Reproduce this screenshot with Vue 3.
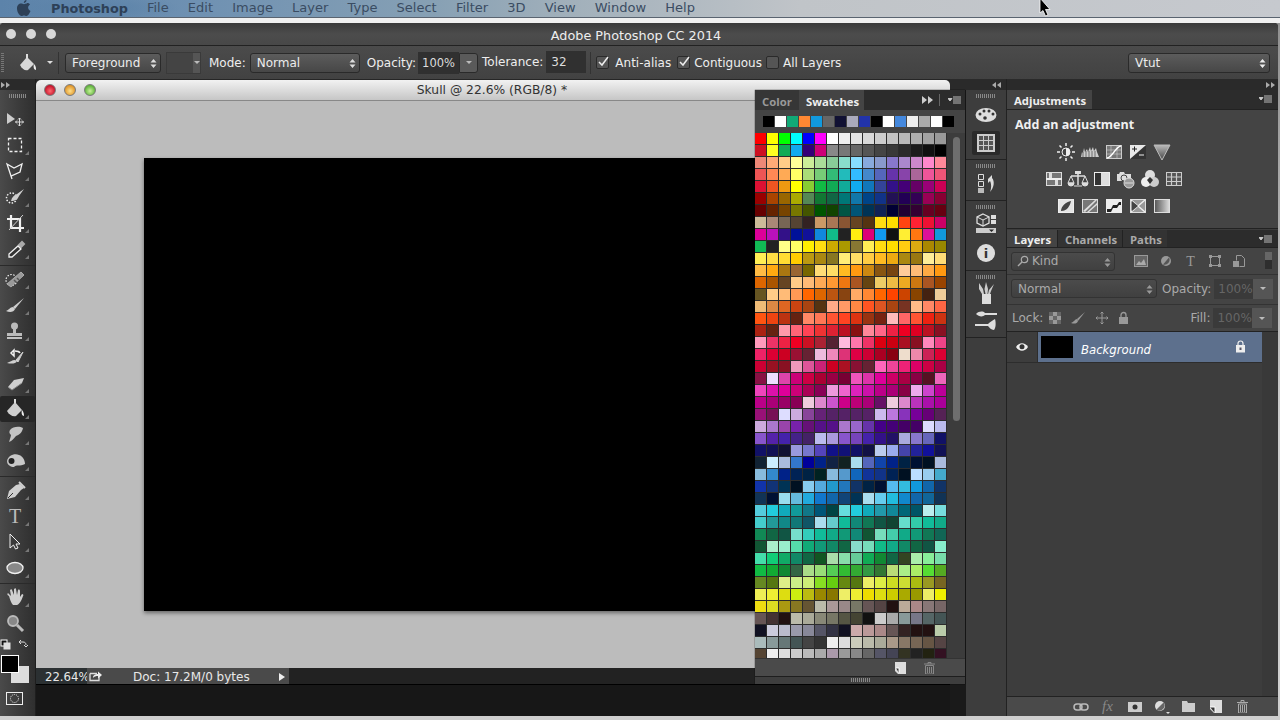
<script setup>
const menus = ['File', 'Edit', 'Image', 'Layer', 'Type', 'Select', 'Filter', '3D', 'View', 'Window', 'Help']

const recent = '000 fff 1a7 f83 19d 666 113 aab 23a 000 fff 48d eee aaa fff 000'.split(' ')
const swatchRows = [
  'f00 ff0 0f0 0ff 00f f0f fff eee e3e3e3 d8d8d8 ccc c2c2c2 b8b8b8 aeaeae a2a2a2 999',
  'c12 ff2 1a5 1ae 307 c07 888 777 666 555 444 383838 2a2a2a 1c1c1c 101010 000',
  'e87 fa7 fc8 ff9 ce9 ad9 8c9 8dc 8df 8ad 89c 87c a8c c8c f8c f89',
  'e55 f85 fa5 ff6 ad7 7c7 3b7 2bb 3bf 48c 56b 63a 84a a69 e59 e57',
  'd13 e52 e91 ff0 8c3 1b4 1a5 1a9 1ae 17b 349 318 407 606 907 c05',
  '900 a40 960 aa0 585 173 164 077 17a 048 138 215 205 305 905 803',
  '600 620 740 770 450 050 140 054 057 035 125 003 203 303 602 601',
  'cb9 a87 765 543 322 c96 a75 853 642 531 fd1 fd0 f41 f23 e13 c06',
  'd09 b1b 318 019 119 18d 1b8 222 fe1 d07 19e 111 fe3 f71 d19 19d',
  '1b5 222 ff8 ff6 fe0 fd1 ca0 a90 873 fe5 fd1 fd0 fc1 da1 a80 980',
  'fe5 fd4 fd3 fc0 b91 a81 872 fe7 fd6 fc4 fb2 ea1 a81 971 fe9 fd7',
  'fb4 fa1 a71 963 760 fd7 fd6 fb2 f91 c81 851 741 fc9 fb7 fa4 f91',
  'd60 a50 642 fc8 fb7 fa5 f93 e71 a52 641 ec6 eb4 ea2 c71 a52 940',
  '652 fc8 fb7 f95 f60 d60 b51 841 fa6 f83 f60 f40 c40 840 421 ec9',
  'eb7 d84 d62 c41 a41 531 fa8 f96 f84 f52 d52 a41 732 fb8 f86 f64',
  'f51 e41 b31 621 f86 f75 f53 f42 d31 931 721 fbb f66 f53 e21 c31',
  'a21 621 f9a f67 f45 e33 d23 b12 811 f89 f68 e24 e02 d02 b12 812',
  'f9b e36 e24 e02 c12 a23 523 fbd f7a e36 d01 c01 a12 812 f8b e48',
  'e26 d03 c02 913 623 ebd e8b d37 d04 c03 a02 801 edc e8a c25 d03',
  'c03 912 812 e9b d59 c27 c02 a12 813 623 f6b e49 e27 d06 c04 a04',
  '814 edf d4a c07 c04 a03 904 703 e5b d3a d09 c06 a04 804 512 e6b',
  'e4b d1a d09 c07 a05 805 e9d e6c d2b c1a b08 a07 804 eae c4c b09',
  'b08 a07 906 805 ecd d8c c5c c08 b07 a07 616 ecd d8c b3b a1a a09',
  '917 715 ddf cad 849 627 526 526 526 526 cbe b7d 83b 709 607 525',
  'cad a7c 94a 72a 617 518 518 a7c 96c 63a 408 407 406 406 ddf bbe',
  '85c 52a 42a 428 426 bbe a9d 85c 74b 42a 318 216 aad 87c 66b 116',
  '116 115 113 99d 77c 54b 118 117 116 114 bce 9ae 44a 229 119 115',
  '123 cef abd 37c 009 028 124 122 ade 56b 14a 028 024 013 012 abd',
  '8bd 38c 028 025 024 022 8bd 59c 16b 139 138 025 012 bdf 9ce 4ac',
  '13a 137 035 012 8ce 5ad 29c 27b 136 024 013 5be 3bd 19d 16a 136',
  '135 013 9de 6bd 2ad 17c 16a 147 035 ade 6ce 2bd 18c 16a 169 135',
  '5cd 2cd 1ab 199 178 057 044 6dd 2cd 1ab 29a 189 067 056 bee 7dd',
  '4cc 299 188 177 156 ade 6cc 1b9 187 175 154 143 6dc 3ca 1b9 1a8',
  '185 164 154 7dc 3cb 1b9 1a8 197 187 153 7db 4ca 1a8 197 175 165',
  '153 aec 9ec 5da 1a7 197 186 164 8dc 7db 1b8 1a8 186 164 154 8ec',
  '4da 1c7 1a6 186 164 152 ada 8da 6c9 1a5 183 164 342 aea 8e9 7da',
  '1b4 1a3 183 364 ad8 9d7 5c5 3b3 3a3 394 373 bd7 ae8 ae6 5d3 5a2',
  '682 571 de8 ce8 ce7 8d2 6c1 681 571 ee6 de4 cd2 cd3 ab1 992 762',
  'ee5 ee3 dd1 ce1 bb1 980 870 ee6 ee3 ed0 dd1 cc0 aa0 990 ee6 ee0',
  'ed1 dd2 a91 872 653 bba a99 988 776 655 544 211 ba9 a88 877 766',
  '655 433 211 bba aa9 887 776 554 443 111 ccc aaa 899 778 566 455',
  '112 ccd bbc 99a 889 556 334 112 caa b99 a88 655 322 211 211 bca',
  'abb 899 677 455 444 333 eee ddd ccb bba aa9 a98 876 765 654 544',
  '543 eee ddd ccc bbb aaa a9a 999 888 666 556 445 332 222 221 312',
].map((r) => r.split(' '))
const swatches = swatchRows.flat()

const L = '#cfcfcf'
const W = '#f0f0f0'
const tools = [
  { h: 26, svg: `<path d="M7 7v11l8-5z" fill="#ccc"/><path d="M19.5 12v8M15.5 16h8M18 13.5l1.5-1.5 1.5 1.5M18 18.5l1.5 1.5 1.5-1.5M17 14.5L15.5 16l1.5 1.5M22 14.5l1.5 1.5-1.5 1.5" stroke="#ddd" fill="none"/>` },
  { h: 26, fly: 1, svg: `<rect x="8.5" y="6.5" width="13" height="13" fill="none" stroke="${W}" stroke-width="1.3" stroke-dasharray="3 2"/>` },
  { h: 26, fly: 1, svg: `<path d="M7 6l7 4 8-4-2 8-9 4zM11 18l1 3" fill="none" stroke="${W}" stroke-width="1.3"/>` },
  { h: 26, fly: 1, svg: `<circle cx="11.5" cy="14" r="5" fill="none" stroke="${W}" stroke-width="1.5" stroke-dasharray="1.5 1.5"/><path d="M24 5l-7 5c-3 1-5 3-6 7 4 0 7-2 8-5z" fill="${L}"/>` },
  { h: 26, fly: 1, svg: `<path d="M11 5v13h13M7 9h13v13" fill="none" stroke="${W}" stroke-width="2.2"/><path d="M9 20L23 5" stroke="${L}"/>` },
  { h: 30, sep: 1, fly: 1, svg: `<path d="M19 9l3-3 2 2-3 3z" fill="#aaa" stroke="#aaa" stroke-width="2"/><path d="M18 10l3 3-9 8H9v-3z" fill="#333" stroke="${W}" stroke-width="1.3"/>` },
  { h: 26, fly: 1, svg: `<circle cx="11.5" cy="14" r="5.5" fill="none" stroke="${W}" stroke-width="1.2" stroke-dasharray="1.5 1.5"/><path d="M21 6l3 3-13 12-4-3z" fill="#999" stroke="#aaa"/><path d="M14 14l3 3M17 12l2 2" stroke="#555" stroke-width="1.5"/>` },
  { h: 26, fly: 1, svg: `<path d="M24 6L13 15l2 2z" fill="${L}"/><path d="M13 15c-3 0-4 3-7 4 4 2 8 1 9-2z" fill="${L}"/>` },
  { h: 26, fly: 1, svg: `<circle cx="14.5" cy="8" r="3.5" fill="#bbb"/><path d="M13 10h3v5h-3zM7 15h15v3H7z" fill="#bbb"/><path d="M7 20h15" stroke="${W}" stroke-width="1.5"/>` },
  { h: 26, fly: 1, svg: `<path d="M11 9l3-3v6zM15 7c4 0 5 2 5 2" stroke="${W}" fill="none" stroke-width="1.5"/><path d="M23 8l-7 8 2 2z" fill="${L}" stroke="${L}"/><path d="M15 16c-3 0-5 2-8 3 4 1 9 1 10-2z" fill="${L}"/>` },
  { h: 26, fly: 1, svg: `<path d="M8 17l6-7 10-2-2 5-10 7z" fill="${L}"/><path d="M8 17l4 3 10-7" stroke="#888" fill="none"/>` },
  { h: 26, fly: 1, active: 1, svg: `<path d="M14 3h2v6h-2z" fill="#ddd"/><path d="M15 6l7 8-6 6c-3 1-7-1-9-5z" fill="${L}"/><path d="M22 14c2 2 2 5 2 6-2 0-3-3-2-6z" fill="#eee"/>` },
  { h: 26, fly: 1, svg: `<path d="M10 8c3-4 10-4 13-2-1 5-4 7-7 8-2 2-4 5-7 6 1-3 2-6 2-7-2-2-2-3-1-5z" fill="#c4c4c4"/>` },
  { h: 29, sep: 1, fly: 1, svg: `<path d="M7 13c1-5 7-8 12-6 4 1 6 6 6 9-5 3-9 0-11 3-3 0-7-2-7-6z" fill="#c8c8c8"/><circle cx="11.5" cy="13" r="3" fill="#222"/>` },
  { h: 26, fly: 1, svg: `<path d="M20 7l4 4-3 2-6 7-8 2 2-8 7-6z" fill="${L}"/><path d="M8 21l5-5" stroke="#333"/><path d="M19 5l6 6" stroke="${L}" stroke-width="2"/>` },
  { h: 26, fly: 1, svg: `<text x="15" y="20" text-anchor="middle" font-family="Liberation Serif, serif" font-size="20" fill="#bbb">T</text>` },
  { h: 26, fly: 1, svg: `<path d="M10 5v14l3.5-3 2 4 2.500-1-2-4H20z" fill="#3a3a3a" stroke="${W}"/>` },
  { h: 29, sep: 1, fly: 1, svg: `<ellipse cx="15" cy="13" rx="8" ry="5.500" fill="#888" stroke="${W}" stroke-width="1.3"/>` },
  { h: 26, fly: 1, svg: `<path d="M9 12c-2-1-2-2-1-3l3 3-1-6c1-1 2-1 2 0l2 5 0-6c1-1 2-1 2 0l1 6 1-5c1-1 2 0 2 1l0 6 2-3c1 0 2 1 1 2-1 3-3 8-6 9h-4c-2-2-3-6-4-9z" fill="${L}"/>` },
  { h: 25, svg: `<circle cx="13" cy="11" r="5" fill="#888" stroke="#bbb" stroke-width="1.800"/><path d="M17 15l6 6" stroke="#bbb" stroke-width="3"/>` },
]
</script>

<template>
  <div class="root">
    <header class="menubar">
      <svg class="apple" width="16" height="17" viewBox="0 0 16 17"><path d="M11 3.500c-1.200 0-2 .7-3 .7s-1.800-.7-3-.7C3 3.500 1 5 1 8.500 1 12 3.500 16 5.500 16c1 0 1.500-.6 2.500-.6s1.500.6 2.500.6c1.500 0 3-2.500 4-5-1.500-.7-2.400-2-2.400-3.400 0-1.300.7-2.400 1.900-3.200-.7-1-1.800-1.400-3-1.400zM10.500 0C9 .2 7.700 1.500 7.800 3c1.500 0 2.800-1.400 2.700-3z" fill="#2d4057"/></svg>
      <b class="app-name">Photoshop</b>
      <span v-for="m in menus" :key="m" class="menu">{{ m }}</span>
    </header>
    <div class="strip"></div>

    <main class="app">
      <div class="titlebar">
        <span class="tl-dots"><i></i><i></i><i></i></span>
        <span class="app-title">Adobe Photoshop CC 2014</span>
      </div>

      <div class="options">
        <span class="grip-v"></span>
        <svg class="opt-bucket" width="22" height="22" viewBox="0 0 22 22"><path d="M9 2h2v5H9z" fill="#ddd"/><path d="M10 5l7 7-6 6c-3 1-6-1-8-5z" fill="#d8d8d8"/><path d="M17 12c2 2 2 4 2 6-2 0-3-3-2-6z" fill="#eee"/></svg>
        <span class="tri-down t1"></span>
        <span class="vsep s1"></span>
        <span class="select w-fore">Foreground<svg class="updown" width="7" height="11" viewBox="0 0 7 11"><path d="M3.500 1L6.500 4.500H.5zM3.500 10L.5 6.500h6z" fill="#ddd"/></svg></span>
        <span class="pattern"><span class="pat-arrow"><span class="tri-down small"></span></span></span>
        <span class="lbl l-mode">Mode:</span>
        <span class="select w-mode">Normal<svg class="updown" width="7" height="11" viewBox="0 0 7 11"><path d="M3.500 1L6.500 4.500H.5zM3.500 10L.5 6.500h6z" fill="#ddd"/></svg></span>
        <span class="lbl l-op">Opacity:</span>
        <span class="num w-op">100%</span><span class="num-arrow"><span class="tri-down small"></span></span>
        <span class="lbl l-tol">Tolerance:</span>
        <span class="num w-tol">32</span>
        <span class="vsep s2"></span>
        <span class="check c1"><svg width="13" height="13" viewBox="0 0 13 13"><path d="M3 6l3 3 6-8" fill="none" stroke="#eee" stroke-width="1.500"/></svg></span><span class="lbl chk">Anti-alias</span>
        <span class="check c2"><svg width="13" height="13" viewBox="0 0 13 13"><path d="M3 6l3 3 6-8" fill="none" stroke="#eee" stroke-width="1.500"/></svg></span><span class="lbl chk">Contiguous</span>
        <span class="check c3"></span><span class="lbl chk">All Layers</span>
        <span class="select w-vtut">Vtut<svg class="updown" width="7" height="11" viewBox="0 0 7 11"><path d="M3.500 1L6.500 4.500H.5zM3.500 10L.5 6.500h6z" fill="#eee"/></svg></span>
      </div>

      <div class="workspace">
        <aside class="toolbox">
          <div class="tool-top"><svg class="dbl" width="9" height="6" viewBox="0 0 9 6"><path d="M0 0l4 3-4 3zM5 0l4 3-4 3z" fill="#aaa"/></svg></div>
          <div class="grip tool-grip"></div>
          <div v-for="(t, i) in tools" :key="i" class="tool" :class="{ active: t.active, sep: t.sep }" :style="{ height: t.h + 'px' }">
            <svg width="35" height="26" viewBox="0 0 35 26">
              <g v-html="t.svg"></g>
              <path v-if="t.fly" d="M29 19v4h-4z" fill="#777"/>
            </svg>
          </div>
          <svg class="tool-colors" width="35" height="50" viewBox="0 0 35 50">
            <rect x="1" y="3" width="6" height="6" fill="#111" stroke="#fff"/><rect x="4" y="6" width="6" height="6" fill="#ddd" stroke="#ddd"/>
            <path d="M19 5h4c2 0 3 1 3 3M19 5l2-2M19 5l2 2M26 10l-2-2M26 10l2-2" stroke="#ddd" fill="none"/>
            <rect x="11" y="29" width="18" height="17" fill="#ddd"/>
            <rect x="1.500" y="18.500" width="17" height="17" fill="#000" stroke="#fff"/>
          </svg>
          <svg class="tool-mask" width="35" height="14" viewBox="0 0 35 14"><rect x="6.500" y=".5" width="16" height="12" fill="none" stroke="#eee"/><circle cx="14.500" cy="6.500" r="4" fill="none" stroke="#eee" stroke-dasharray="1 1"/></svg>
        </aside>

        <section class="doc">
          <div class="doc-head">
            <span class="lights"><i class="r"></i><i class="y"></i><i class="g"></i></span>
            <span class="doc-title">Skull @ 22.6% (RGB/8) *</span>
          </div>
          <div class="doc-canvas"><div class="art"></div></div>
          <div class="status">
            <span class="zoom-val">22.64%</span>
            <span class="status-mid">
              <svg width="14" height="12" viewBox="0 0 14 12"><path d="M1 3.500h7M1 3.500v7h9V7" fill="none" stroke="#ddd" stroke-width="1.300"/><path d="M4 8c0-3 2-4 5-4V1.500L13 5 9 8.500V6c-2 0-4 .5-5 2z" fill="#eee"/></svg>
              <span class="doc-info">Doc: 17.2M/0 bytes</span>
              <span class="tri-right"></span>
            </span>
          </div>
          <div class="doc-rest"></div>
        </section>

        <div class="gap-col"><div class="gap-top"></div></div>

        <nav class="dock">
          <div class="collapse-bar dock-bar"><svg width="9" height="6" viewBox="0 0 9 6"><path d="M4 0L0 3l4 3zM9 0L5 3l4 3z" fill="#aaa"/></svg></div>
          <div class="dock-sec s-a">
            <div class="grip"></div>
            <svg class="d-ico" width="26" height="24" viewBox="0 0 26 24"><ellipse cx="13" cy="12" rx="10.500" ry="7" fill="#ddd"/><circle cx="7" cy="11" r="1.500" fill="#333"/><circle cx="11" cy="8" r="1.500" fill="#333"/><circle cx="16" cy="8" r="1.500" fill="#333"/><circle cx="20" cy="11" r="1.500" fill="#333"/><circle cx="12" cy="15" r="1.800" fill="#333"/></svg>
            <span class="d-sel"><svg width="18" height="18" viewBox="0 0 18 18"><rect width="18" height="18" fill="#ccc"/><path d="M2 2h4v4H2zM7 2h4v4H7zM12 2h4v4h-4zM2 7h4v4H2zM7 7h4v4H7zM12 7h4v4h-4zM2 12h4v4H2zM7 12h4v4H7zM12 12h4v4h-4z" fill="#555"/></svg></span>
          </div>
          <div class="dock-sec s-b">
            <div class="grip"></div>
            <svg class="d-ico" width="22" height="22" viewBox="0 0 22 22"><path d="M3.500 2.500h5v5h-5zM3.500 9.500h5v5h-5z" fill="none" stroke="#ddd"/><path d="M3 16h6v5H3z" fill="#bbb"/><path d="M13 7l4-4v3c3 3 2 10-2 14 2-5 1-9 0-11l-2 2z" fill="#ddd"/></svg>
          </div>
          <div class="dock-sec s-c">
            <div class="grip"></div>
            <svg class="d-ico" width="22" height="22" viewBox="0 0 22 22"><path d="M8 1l6 3v6l-6 3-6-3V4z" fill="none" stroke="#ddd" stroke-width="1.300"/><path d="M2 4l6 3 6-3M8 7v6" stroke="#ddd" fill="none"/><path d="M16 2h5v4h-5zM16 7h5v4h-5z" fill="#ddd"/><path d="M1 15h20v5H1z" fill="#ccc"/><path d="M14 16.500h5l-2.500 2.500z" fill="#222"/></svg>
            <span class="info-i">i</span>
          </div>
          <div class="dock-sec s-d">
            <div class="grip"></div>
            <svg class="d-ico d-brush" width="22" height="24" viewBox="0 0 22 24"><path d="M7 13h9v10H7z" fill="#ddd"/><path d="M4 2l4 6 1 5H7L4 8zM11 1l2 7-.5 5h-2l-1-5zM19 3l-3 7-1 3h-2l1-4z" fill="#ccc"/></svg>
            <svg class="d-ico d2" width="24" height="22" viewBox="0 0 24 22"><path d="M2 4c3-3 7-3 9-1h12v2H11c-2 2-6 2-9-1z" fill="#ddd"/><path d="M1 14h13c2-2 5-4 7-5 1 3 1 9-1 11-3 0-5-3-6-4H1z" fill="#ddd"/></svg>
          </div>
          <div class="dock-rest"></div>
        </nav>

        <aside class="right">
          <div class="collapse-bar right-bar"><svg width="9" height="6" viewBox="0 0 9 6"><path d="M0 0l4 3-4 3zM5 0l4 3-4 3z" fill="#aaa"/></svg></div>

          <div class="tabs">
            <span class="tab on w-adj">Adjustments</span>
            <svg class="pmenu" width="13" height="9" viewBox="0 0 13 9"><path d="M0 2.500h4L2 5zM5 1h8M5 3h8M5 5h8M5 7h8" fill="#ccc" stroke="#ccc" stroke-width=".9"/></svg>
          </div>
          <div class="adj">
            <h2 class="adj-title">Add an adjustment</h2>
            <div class="adj-rows">
              <div class="adj-row">
                <svg width="24" height="24" viewBox="0 0 24 24"><path d="M12 8a4 4 0 010 8z" fill="#eee"/><circle cx="12" cy="12" r="4" fill="none" stroke="#eee"/><path d="M12 3v3M12 18v3M3 12h3M18 12h3M5.500 5.500l2 2M16.500 16.500l2 2M5.500 18.500l2-2M16.500 7.500l2-2" stroke="#eee" stroke-width="1.500"/></svg>
                <svg width="24" height="24" viewBox="0 0 24 24"><path d="M3 17l1-5 1 1 1-5 1 4 2-3 1 3 2-5 1 4 2-4 1 4 2-3 1 4 2 5z" fill="#ccc"/><path d="M5 12v5M8 11v6M11 11v6M14 11v6M17 11v6" stroke="#444" stroke-width=".7"/></svg>
                <svg width="24" height="24" viewBox="0 0 24 24"><rect x="4.500" y="5.500" width="15" height="13" fill="#777" stroke="#ccc"/><path d="M4 14h16M4 10h16M9 5v14M15 5v14" stroke="#ccc" stroke-width=".6"/><path d="M5 18C10 18 14 6 19 6" stroke="#fff" stroke-width="1.300" fill="none"/></svg>
                <svg width="24" height="24" viewBox="0 0 24 24"><path d="M4 5h16v14H4z" fill="#e8e8e8"/><path d="M4 19L20 5v14z" fill="#333"/><path d="M6 9h5M8.500 6.500v5" stroke="#222"/><path d="M13 15h5" stroke="#eee"/></svg>
                <svg width="24" height="24" viewBox="0 0 24 24"><defs><linearGradient id="tg" x1="0" y1="0" x2="0" y2="1"><stop offset="0" stop-color="#bbb"/><stop offset="1" stop-color="#444"/></linearGradient></defs><path d="M4 5h16l-8 15z" fill="url(#tg)" stroke="#bbb"/></svg>
              </div>
              <div class="adj-row">
                <svg width="24" height="24" viewBox="0 0 24 24"><rect x="4.500" y="5.500" width="15" height="13" fill="#777" stroke="#ddd"/><path d="M4 12h16" stroke="#eee" stroke-width="2"/><path d="M7 6h3v5H7zM13 13h3v5h-3z" fill="#ddd"/></svg>
                <svg width="24" height="24" viewBox="0 0 24 24"><path d="M12 4v14M5 9h14" stroke="#ddd" stroke-width="1.500"/><path d="M5 9l-3 7h6zM19 9l-3 7h6z" fill="none" stroke="#ddd"/><path d="M2 16a3 3 0 006 0zM16 16a3 3 0 006 0zM8 19h8" fill="#ddd" stroke="#ddd"/><path d="M9 7h6V4H9z" fill="#ddd"/></svg>
                <svg width="24" height="24" viewBox="0 0 24 24"><rect x="4.500" y="5.500" width="15" height="13" fill="#ddd" stroke="#eee"/><path d="M5 6h6v12H5z" fill="#333"/></svg>
                <svg width="24" height="24" viewBox="0 0 24 24"><path d="M3 7h2l1-2h4l1 2h6v7H3z" fill="#ddd"/><circle cx="10" cy="11" r="3" fill="none" stroke="#444"/><circle cx="15" cy="16" r="5" fill="#999" stroke="#ddd"/><path d="M11 16h8" stroke="#ddd"/></svg>
                <svg width="24" height="24" viewBox="0 0 24 24"><circle cx="12" cy="8" r="5" fill="#ddd"/><circle cx="8" cy="15" r="5" fill="#eee"/><circle cx="16" cy="15" r="5" fill="#ccc"/><path d="M12 10l3 3-3 4-3-4z" fill="#333"/></svg>
                <svg width="24" height="24" viewBox="0 0 24 24"><rect x="4.500" y="5.500" width="15" height="13" fill="#555" stroke="#ccc"/><path d="M5 10h14M5 14.500h14M9.500 6v12M14.500 6v12" stroke="#ccc" stroke-width="1.200"/></svg>
              </div>
              <div class="adj-row">
                <svg width="24" height="24" viewBox="0 0 24 24"><rect x="4.500" y="5.500" width="15" height="13" fill="#e4e4e4" stroke="#eee"/><path d="M7 17c0-5 5-9 10-10-1 5-4 10-10 10z" fill="#444"/></svg>
                <svg width="24" height="24" viewBox="0 0 24 24"><rect x="4.500" y="5.500" width="15" height="13" fill="#777" stroke="#ddd"/><path d="M5 17L17 6h2L7 18zM9 18l10-9v2l-8 7z" fill="#ddd"/></svg>
                <svg width="24" height="24" viewBox="0 0 24 24"><rect x="4.500" y="5.500" width="15" height="13" fill="#eee" stroke="#eee"/><path d="M5 18v-3h4l2-4h4l2-3h2v3h-2l-2 3h-4l-2 4z" fill="#222"/></svg>
                <svg width="24" height="24" viewBox="0 0 24 24"><rect x="4.500" y="5.500" width="15" height="13" fill="#999" stroke="#ddd"/><path d="M5 6l14 12M19 6L5 18" stroke="#eee" stroke-width="1.500"/><path d="M12 12L6 7v10z" fill="#444"/></svg>
                <svg width="24" height="24" viewBox="0 0 24 24"><defs><linearGradient id="gm" x1="0" y1="0" x2="1" y2="0"><stop offset="0" stop-color="#555"/><stop offset="1" stop-color="#ddd"/></linearGradient></defs><rect x="4.500" y="5.500" width="15" height="13" fill="url(#gm)" stroke="#ddd"/></svg>
              </div>
            </div>
          </div>

          <div class="tabs layers-tabs">
            <span class="tab on w-lay">Layers</span><span class="tab off w-chan">Channels</span><span class="tab off w-path">Paths</span>
            <svg class="pmenu" width="13" height="9" viewBox="0 0 13 9"><path d="M0 2.500h4L2 5zM5 1h8M5 3h8M5 5h8M5 7h8" fill="#ccc" stroke="#ccc" stroke-width=".9"/></svg>
          </div>
          <div class="row-filter">
            <span class="select dim w-kind"><svg width="12" height="12" viewBox="0 0 12 12"><circle cx="7.500" cy="4.500" r="3.200" fill="none" stroke="#aaa" stroke-width="1.200"/><path d="M5 7L1 11" stroke="#aaa" stroke-width="1.500"/></svg>Kind<svg class="updown" width="7" height="11" viewBox="0 0 7 11"><path d="M3.500 1L6.500 4.500H.5zM3.500 10L.5 6.500h6z" fill="#999"/></svg></span>
            <span class="filter-icons">
              <svg width="14" height="12" viewBox="0 0 14 12"><rect x=".5" y=".5" width="13" height="11" fill="#666" stroke="#999"/><path d="M2 10l3-4 2 2 3-4 2 6z" fill="#aaa"/></svg>
              <svg width="12" height="12" viewBox="0 0 12 12"><circle cx="6" cy="6" r="5" fill="#999"/><path d="M9 2.500L3 9.500A5 5 0 009 2.500z" fill="#555"/></svg>
              <svg width="13" height="16" viewBox="0 0 13 16"><text x="6.500" y="13" text-anchor="middle" font-family="Liberation Serif, serif" font-size="14" fill="#999">T</text></svg>
              <svg width="12" height="12" viewBox="0 0 12 12"><path d="M1.500 1.500h9v9h-9z" fill="none" stroke="#999"/><path d="M0 0h3v3H0zM9 0h3v3H9zM0 9h3v3H0zM9 9h3v3H9z" fill="#999"/></svg>
              <svg width="12" height="12" viewBox="0 0 12 12"><path d="M3.500.5h5l3 3v8h-5M3.500.5v5" fill="none" stroke="#999"/><path d="M0 6h6v6H0z" fill="#999"/></svg>
            </span>
            <span class="toggle"></span>
          </div>
          <div class="row-blend">
            <span class="select dim w-blend">Normal<svg class="updown" width="7" height="11" viewBox="0 0 7 11"><path d="M3.500 1L6.500 4.500H.5zM3.500 10L.5 6.500h6z" fill="#999"/></svg></span>
            <span class="dim-lbl">Opacity:</span>
            <span class="dim-num">100%</span><span class="dim-arrow"><span class="tri-down small"></span></span>
          </div>
          <div class="row-lock">
            <span class="dim-lbl">Lock:</span>
            <span class="lock-icons">
              <svg width="12" height="12" viewBox="0 0 12 12"><rect width="12" height="12" fill="#999"/><path d="M0 0h4v4H0zM8 0h4v4H8zM4 4h4v4H4zM0 8h4v4H0zM8 8h4v4H8z" fill="#666"/></svg>
              <svg width="16" height="14" viewBox="0 0 16 14"><path d="M15 1L7 8l1 2z" fill="#999"/><path d="M7 8c-2 0-3 3-6 4 3 1 6 1 7-2z" fill="#999"/></svg>
              <svg width="14" height="14" viewBox="0 0 14 14"><path d="M7 1v12M1 7h12M5.500 2.500L7 1l1.500 1.500M5.500 11.500L7 13l1.500-1.500M2.500 5.500L1 7l1.500 1.500M11.500 5.500L13 7l-1.500 1.500" fill="none" stroke="#999"/></svg>
              <svg width="11" height="14" viewBox="0 0 11 14"><path d="M3 6V4a2.500 2.500 0 015 0v2" fill="none" stroke="#999" stroke-width="1.300"/><rect x="1" y="6" width="9" height="7" fill="#999"/></svg>
            </span>
            <span class="dim-lbl fill">Fill:</span>
            <span class="dim-num">100%</span><span class="dim-arrow"><span class="tri-down small"></span></span>
          </div>

          <div class="layers-list">
            <div class="layer-row">
              <span class="eye"><svg width="14" height="10" viewBox="0 0 14 10"><path d="M1 5c3-5 9-5 12 0-3 5-9 5-12 0z" fill="#eee"/><circle cx="7" cy="4.800" r="2.500" fill="#333"/></svg></span>
              <span class="layer-sel">
                <span class="thumb"></span>
                <span class="layer-name">Background</span>
                <svg class="layer-lock" width="11" height="13" viewBox="0 0 11 13"><path d="M3 5V3.500a2.500 2.500 0 015 0V5" fill="none" stroke="#eee" stroke-width="1.200"/><rect x="1" y="5" width="9" height="7.500" fill="#eee"/><rect x="4.500" y="7.500" width="2" height="2.500" fill="#556"/></svg>
              </span>
            </div>
          </div>
          <div class="layers-foot">
            <span class="fc"><svg width="16" height="12" viewBox="0 0 16 12"><rect x="1" y="3" width="8" height="6" rx="3" fill="none" stroke="#bbb" stroke-width="1.500"/><rect x="7" y="3" width="8" height="6" rx="3" fill="none" stroke="#bbb" stroke-width="1.500"/></svg></span>
            <span class="fc fx">fx</span>
            <span class="fc"><svg width="14" height="10" viewBox="0 0 14 10"><rect width="14" height="10" fill="#ccc"/><circle cx="7" cy="5" r="2.500" fill="#333"/></svg></span>
            <span class="fc"><svg width="16" height="14" viewBox="0 0 16 14"><circle cx="6" cy="6" r="5" fill="#ddd"/><path d="M9.500 2.500l-7 7a5 5 0 007-7z" fill="#666"/><path d="M12 12h4l-2 2z" fill="#ddd"/></svg></span>
            <span class="fc"><svg width="13" height="11" viewBox="0 0 13 11"><path d="M0 0h5l1 2h7v9H0z" fill="#ccc"/></svg></span>
            <span class="fc"><svg width="12" height="13" viewBox="0 0 12 13"><path d="M0 0h12v13H4L0 9z" fill="#ddd"/><path d="M0 7h5v6" fill="#333" stroke="#fff"/></svg></span>
            <span class="fc"><svg width="11" height="13" viewBox="0 0 11 13"><path d="M0 2.500h11M4 2V.5h3V2M1.500 4h8v9h-8z" fill="none" stroke="#aaa"/><path d="M3.500 5v7M5.500 5v7M7.500 5v7" stroke="#aaa"/></svg></span>
          </div>
        </aside>

        <div class="swatches">
          <div class="sw-tabs">
            <span class="sw-tab dimtab">Color</span>
            <span class="sw-tab on">Swatches</span>
            <span class="sw-tab-tools">
              <svg width="11" height="8" viewBox="0 0 11 8"><path d="M0 0l5 4-5 4zM6 0l5 4-5 4z" fill="#ccc"/></svg>
              <span class="sw-sep"></span>
              <svg width="13" height="9" viewBox="0 0 13 9"><path d="M0 2.500h4L2 5zM5 1h8M5 3h8M5 5h8M5 7h8" fill="#ccc" stroke="#ccc" stroke-width=".9"/></svg>
            </span>
          </div>
          <div class="sw-recent"><i v-for="(c, i) in recent" :key="i" :style="{ background: '#' + c }"></i></div>
          <div class="sw-body">
            <div class="sw-grid"><i v-for="(c, i) in swatches" :key="i" :style="{ background: '#' + c }"></i></div>
            <div class="sw-scroll"><span class="sw-thumb"></span></div>
          </div>
          <div class="sw-foot">
            <svg width="11" height="12" viewBox="0 0 11 12"><path d="M0 0h11v12H3L0 9z" fill="#ddd"/><path d="M1 6h3v5" fill="#333" stroke="#fff"/></svg>
            <svg width="11" height="12" viewBox="0 0 11 12"><path d="M0 2h11M4 2V.5h3V2M1.500 3.500h8V12h-8z" fill="none" stroke="#888"/><path d="M3.500 5v6M5.500 5v6M7.500 5v6" stroke="#888"/></svg>
          </div>
          <div class="sw-drag"><span class="grip small"></span></div>
        </div>
      </div>
    </main>

    <svg class="cursor" width="14" height="18" viewBox="0 0 14 18"><path d="M2 -2V13L5 10.500 7.500 16 10 15 7.500 9.500H12z" fill="#000" stroke="#fff" stroke-width=".8"/></svg>
  </div>
</template>

<style>
html, body { margin: 0; background: #ddd; }
</style>

<style scoped>
.root { position: relative; width: 1280px; height: 720px; overflow: hidden; background: linear-gradient(#8d8d8d, #cfcfcf 60%); font-family: "DejaVu Sans", sans-serif; font-size: 12px; color: #e4e4e4; }
i { display: block; font-style: normal; }
.menubar { height: 17px; border-bottom: 1px solid #5a6470; display: flex; align-items: center; background: radial-gradient(ellipse 90px 14px at 90px 8px, #5b82a8, transparent), linear-gradient(90deg, #5c83aa 0, #6f91b2 200px, #86a0b4 430px, #a0afba 560px, #c0c4c8 800px, #c6c9ce 1280px); color: #3a4c62; font-size: 13px; padding-left: 16px; white-space: nowrap; }
.apple { margin-right: 19px; }
.app-name { font-size: 12.800px; margin-right: 19px; color: #2d4057; }
.menu { margin-right: 19.200px; padding-bottom: 2px; }
.strip { height: 5px; background: #f0f0f0; }
.app { width: 1278px; height: 693px; display: flex; flex-direction: column; border-radius: 4px 4px 0 0; overflow: hidden; background: #262626; }
.titlebar { height: 22px; border-bottom: 1px solid #222; background: linear-gradient(#3a3a3a, #4c4c4c 50%, #484848); display: flex; align-items: center; position: relative; }
.tl-dots { display: flex; gap: 10px; padding-left: 6px; }
.tl-dots i { width: 10px; height: 10px; border-radius: 50%; background: #d8d8d8; }
.app-title { position: absolute; left: 0; right: 0; top: 5px; padding-right: 6px; text-align: center; font-size: 12.800px; color: #eee; }
.options { height: 33px; background: linear-gradient(#4b4b4b, #424242); display: flex; align-items: center; position: relative; white-space: nowrap; }
.grip-v { width: 3px; height: 20px; margin-left: 1px; background: repeating-linear-gradient(#777 0 1px, transparent 1px 2px); }
.opt-bucket { margin-left: 13px; }
.tri-down { display: block; width: 0; height: 0; border-left: 3px solid transparent; border-right: 3px solid transparent; border-top: 3px solid #ddd; }
.tri-down.small { border-top-color: #bbb; }
.t1 { margin-left: 8px; }
.vsep { width: 1px; height: 22px; background: #333; }
.s1 { margin-left: 5px; }
.select { position: relative; display: flex; align-items: center; height: 20px; box-sizing: border-box; padding-left: 6px; border: 1px solid #2a2a2a; border-radius: 3px; background: linear-gradient(#5c5c5c, #474747); color: #ececec; font-size: 12px; }
.updown { position: absolute; right: 3px; top: 4px; }
.w-fore { width: 96px; margin-left: 6px; }
.pattern { display: flex; justify-content: flex-end; width: 35px; height: 22px; margin-left: 5px; box-sizing: border-box; border: 1px solid #3a3a3a; background: #444; }
.pat-arrow { width: 7px; display: flex; align-items: center; justify-content: center; background: #555; }
.lbl { color: #eee; }
.l-mode { margin-left: 8px; }
.w-mode { width: 110px; margin-left: 4px; }
.l-op { margin-left: 7px; }
.num { display: flex; align-items: center; height: 22px; box-sizing: border-box; padding-left: 4px; background: #303030; color: #ddd; }
.w-op { width: 41px; margin-left: 2px; font-size: 11.500px; }
.num-arrow { display: flex; align-items: center; justify-content: center; width: 19px; height: 20px; border-radius: 0 3px 3px 0; background: #5a5a5a; border: 1px solid #2a2a2a; box-sizing: border-box; }
.l-tol { margin-left: 4px; margin-top: -2px; }
.w-tol { width: 40px; margin-left: 3px; padding-left: 5px; margin-top: -2px; }
.s2 { margin-left: 4px; }
.check { display: block; width: 13px; height: 13px; box-sizing: border-box; border: 1px solid #2a2a2a; border-radius: 2px; background: #555; line-height: 0; }
.check svg { margin: -1px; }
.c1 { margin-left: 5px; }
.c2 { margin-left: 6px; }
.c3 { margin-left: 4px; }
.chk { margin-left: 4px; }
.c1 + .chk { margin-left: 6px; }
.w-vtut { position: absolute; left: 1128px; width: 142px; height: 20px; top: 7px; }
.workspace { position: relative; flex: 1; min-height: 0; display: flex; background: #262626; }
.toolbox { width: 35px; border-right: 1px solid #1e1e1e; background: linear-gradient(90deg, #4a4a4a, #3c3c3c 50%, #2f2f2f); display: flex; flex-direction: column; flex: none; }
.tool-top { height: 11px; background: #2a2a2a; display: flex; align-items: center; padding-left: 1px; }
.grip { width: 20px; height: 4px; background: repeating-linear-gradient(90deg, #888 0 1px, transparent 1px 2px); margin: 4px auto 0; }
.tool-grip { margin-bottom: 8px; width: 18px; }
.tool { position: relative; flex: none; display: flex; align-items: flex-start; line-height: 0; box-sizing: border-box; }
.tool.sep { border-bottom: 1px solid #2a2a2a; }
.tool.active { background: #262626; border-radius: 2px; }
.tool-colors { display: block; margin-top: 2px; flex: none; }
.tool-mask { display: block; margin-top: 5px; flex: none; }
.doc { width: 914px; flex: none; display: flex; flex-direction: column; padding-top: 1px; box-sizing: border-box; }
.doc-head { position: relative; height: 21px; box-sizing: border-box; border-bottom: 1px solid #888; border-radius: 5px 5px 0 0; background: linear-gradient(#f2f2f2, #c6c6c6); display: flex; align-items: center; }
.lights { display: flex; gap: 8px; padding-left: 8px; }
.lights i { width: 12px; height: 12px; border-radius: 50%; box-sizing: border-box; border: 1px solid #7a7a7a; }
.lights .r { background: radial-gradient(circle at 50% 60%, #ff6a70, #c4122a 70%); }
.lights .y { background: radial-gradient(circle at 50% 60%, #ffe08a, #e0952a 70%); }
.lights .g { background: radial-gradient(circle at 50% 60%, #c8f29a, #5fb33c 70%); }
.doc-title { position: absolute; left: 0; right: 0; top: 3px; padding-right: 2px; text-align: center; color: #333; font-size: 12.300px; }
.doc-canvas { flex: 1; min-height: 0; background: #bcbcbc; padding: 57px 0 0 108px; box-sizing: border-box; }
.art { width: 620px; height: 453px; background: #000; box-shadow: 0 2px 4px rgba(0, 0, 0, .45); }
.status { height: 16px; display: flex; align-items: center; background: #222; color: #e8e8e8; font-size: 11.700px; }
.zoom-val { width: 51px; padding-left: 9px; background: #2b3032; height: 16px; line-height: 18px; box-sizing: content-box; margin-right: -9px; }
.status-mid { width: 202px; height: 16px; display: flex; align-items: center; background: #4a4a4a; padding-left: 2px; box-sizing: border-box; position: relative; }
.doc-info { margin-left: 30px; font-size: 12px; padding-top: 2px; }
.tri-right { position: absolute; left: 192px; top: 5px; width: 0; height: 0; border-left: 6px solid #eee; border-top: 4px solid transparent; border-bottom: 4px solid transparent; }
.doc-rest { height: 32px; background: #171717; border-top: 1px solid #000; box-sizing: border-box; }
.gap-col { width: 16px; flex: none; background: #1a1a1a; }
.gap-top { height: 11px; background: #2a2a2a; }
.dock { width: 40px; flex: none; display: flex; flex-direction: column; background: #3d3d3d; border-right: 1px solid #222; }
.collapse-bar { height: 11px; flex: none; display: flex; align-items: center; justify-content: flex-end; background: #2a2a2a; padding-right: 4px; }
.dock-bar { padding-right: 5px; }
.dock-sec { display: flex; flex-direction: column; align-items: center; border-bottom: 1px solid #222; box-sizing: border-box; }
.d-ico { display: block; margin-top: 4px; }
.s-a { height: 70px; }
.s-a .d-ico { margin-top: 5px; }
.s-b { height: 41px; }
.s-c { height: 70px; }
.s-d { height: 67px; }
.d-brush { margin-top: 2px; }
.d-sel { display: flex; align-items: center; justify-content: center; width: 28px; height: 24px; margin-top: 4px; background: #2a2a2a; border-radius: 2px; }
.info-i { display: flex; align-items: center; justify-content: center; width: 18px; height: 18px; border-radius: 50%; background: #ddd; color: #333; font-weight: bold; font-size: 13px; margin-top: 9px; }
.d2 { margin-top: 5px; }
.dock-rest { flex: 1; }
.right { width: 271px; flex: none; display: flex; flex-direction: column; background: #3d3d3d; }
.right-bar { padding-right: 3px; }
.tabs { height: 20px; flex: none; display: flex; align-items: stretch; position: relative; background: #2c2c2c; border-bottom: 1px solid #222; box-sizing: border-box; font-family: "Open Sans", sans-serif; font-weight: bold; font-size: 11.300px; }
.tab { display: flex; align-items: center; padding: 2px 0 0 7px; box-sizing: border-box; }
.tab.on { background: #444; color: #eee; }
.tab.off { color: #aaa; background: #333; border-left: 1px solid #222; }
.w-adj { width: 85px; }
.w-lay { width: 50px; }
.w-chan { width: 65px; }
.w-path { width: 45px; }
.pmenu { position: absolute; right: 6px; top: 5px; }
.adj { height: 119px; flex: none; background: #444; box-sizing: border-box; padding-top: 7px; border-bottom: 1px solid #222; }
.adj-title { margin: 0 0 0 8px; font-family: "Open Sans", sans-serif; font-size: 12.500px; line-height: 16px; font-weight: bold; color: #f0f0f0; }
.adj-rows { width: 213px; display: flex; flex-direction: column; align-items: center; gap: 3px; margin-top: 7px; }
.adj-row { display: flex; height: 24px; line-height: 0; }
.layers-tabs { height: 18px; margin-top: 1px; }
.row-filter { height: 27px; flex: none; display: flex; align-items: center; position: relative; background: #444; border-bottom: 1px solid #333; box-sizing: border-box; padding-left: 4px; }
.dim { background: linear-gradient(#4b4b4b, #404040); color: #aaa; border-color: #333; gap: 3px; }
.w-kind { width: 104px; height: 19px; font-size: 12px; padding-left: 5px; }
.filter-icons { display: flex; align-items: center; gap: 12px; margin-left: 19px; }
.toggle { position: absolute; left: 258px; top: 4px; width: 7px; height: 17px; background: linear-gradient(#666 50%, #2e2e2e 50%); }
.row-blend { height: 30px; flex: none; display: flex; align-items: center; background: #444; border-bottom: 1px solid #333; box-sizing: border-box; padding: 0 0 2px 4px; }
.w-blend { width: 146px; height: 19px; font-size: 12px; }
.dim-lbl { color: #aaa; margin-left: 5px; }
.dim-num { display: flex; align-items: center; width: 39px; height: 20px; margin-left: 3px; padding-left: 4px; box-sizing: border-box; background: #3a3a3a; color: #666; }
.dim-arrow { display: flex; align-items: center; justify-content: center; width: 20px; height: 20px; background: #555; }
.row-lock { height: 27px; flex: none; display: flex; align-items: center; background: #444; border-bottom: 1px solid #222; box-sizing: border-box; padding-left: 0; }
.lock-icons { display: flex; align-items: center; gap: 9px; margin-left: 6px; }
.fill { margin-left: 61px; }
.layers-list { flex: 1; min-height: 0; background: linear-gradient(90deg, #3d3d3d 255px, #393939 255px); }
.layer-row { display: flex; height: 30px; border-bottom: 1px solid #2d2d2d; width: 255px; }
.eye { display: flex; align-items: center; justify-content: center; width: 31px; border-right: 1px solid #2d2d2d; box-sizing: border-box; }
.layer-sel { position: relative; flex: 1; display: flex; align-items: center; background: #5d708d; }
.thumb { width: 32px; height: 22px; margin-left: 3px; background: #000; }
.layer-name { margin-left: 8px; padding-top: 5px; font-style: italic; color: #fff; font-size: 11.700px; }
.layer-lock { position: absolute; left: 197px; top: 8px; }
.layers-foot { height: 19px; flex: none; display: flex; align-items: center; justify-content: flex-end; padding-right: 22px; background: #4a4a4a; border-top: 1px solid #222; }
.fc { display: flex; align-items: center; justify-content: center; width: 27px; }
.fx { font-family: "Liberation Serif", serif; font-style: italic; font-size: 15px; color: #888; }
.swatches { position: absolute; left: 755px; top: 11px; width: 210px; height: 594px; display: flex; flex-direction: column; background: #444; box-shadow: 0 0 1px #000; }
.sw-tabs { height: 20px; flex: none; display: flex; align-items: stretch; background: #2c2c2c; position: relative; font-family: "Open Sans", sans-serif; font-size: 11.300px; font-weight: bold; }
.sw-tab { display: flex; align-items: center; padding: 2px 0 0 7px; }
.sw-tab.on { background: #444; color: #eee; width: 65px; box-sizing: border-box; white-space: nowrap; }
.sw-tab.dimtab { background: #363636; color: #999; width: 44px; box-sizing: border-box; }
.sw-tab-tools { position: absolute; right: 4px; top: 0; height: 20px; display: flex; align-items: center; gap: 6px; }
.sw-sep { width: 1px; height: 12px; background: #666; margin-right: 2px; }
.sw-recent { height: 23px; flex: none; display: flex; padding: 6px 0 0 8px; box-sizing: border-box; gap: 1px; }
.sw-recent i { width: 11px; height: 11px; }
.sw-body { flex: 1; min-height: 0; display: flex; overflow: hidden; }
.sw-grid { width: 192px; flex: none; display: grid; grid-template-columns: repeat(16, 11px); grid-auto-rows: 11px; gap: 1px; background: #2c2c2c; align-content: start; overflow: hidden; }
.sw-scroll { flex: 1; background: #3c3c3c; padding: 4px 0 0 6px; box-sizing: border-box; }
.sw-thumb { display: block; width: 7px; height: 284px; border-radius: 4px; background: #6e6e6e; }
.sw-foot { height: 18px; flex: none; display: flex; align-items: center; justify-content: flex-end; gap: 18px; padding-right: 30px; background: #4a4a4a; border-top: 1px solid #333; box-sizing: border-box; }
.sw-drag { height: 7px; flex: none; display: flex; justify-content: center; background: #3e3e3e; border-top: 1px solid #1e1e1e; }
.grip.small { margin: 1px 0 0; width: 19px; height: 4px; }
.cursor { position: absolute; left: 1038px; top: 0; }
</style>
